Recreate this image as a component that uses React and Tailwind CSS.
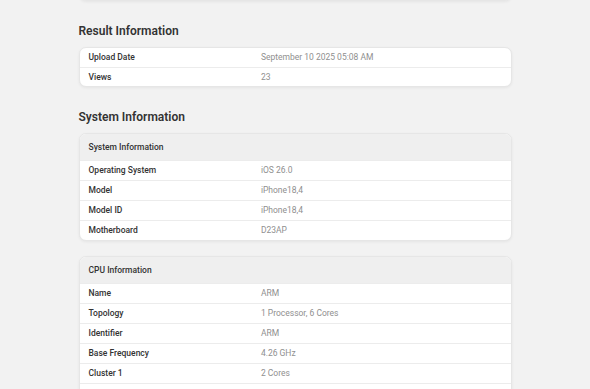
import React from 'react';

const resultRows = [
  ['Upload Date', 'September 10 2025 05:08 AM'],
  ['Views', '23'],
];

const systemRows = [
  ['Operating System', 'iOS 26.0'],
  ['Model', 'iPhone18,4'],
  ['Model ID', 'iPhone18,4'],
  ['Motherboard', 'D23AP'],
];

const cpuRows = [
  ['Name', 'ARM'],
  ['Topology', '1 Processor, 6 Cores'],
  ['Identifier', 'ARM'],
  ['Base Frequency', '4.26 GHz'],
  ['Cluster 1', '2 Cores'],
  ['Cluster 2', '4 Cores'],
];

function Row({ label, value, compact }) {
  return (
    <div className={`flex items-center ${compact ? 'h-[19px]' : 'h-[20px]'} border-t border-[#ececec] first:border-t-0 text-[8.5px]`}>
      <div className="w-2/5 pl-[9px] font-medium text-[#333]">{label}</div>
      <div className="w-3/5 pl-[9px] text-[#8f8f8f]">{value}</div>
    </div>
  );
}

function Card({ title, rows, compact }) {
  return (
    <div className="bg-white rounded-[7px] border border-[#e6e6e6] shadow-[0_1px_3px_rgba(0,0,0,0.06)] overflow-hidden">
      {title && (
        <div className="h-[26px] flex items-center pl-[9px] bg-[#efefef] text-[8.5px] font-medium text-[#333]">
          {title}
        </div>
      )}
      {rows.map(([label, value]) => (
        <Row key={label} label={label} value={value} compact={compact} />
      ))}
    </div>
  );
}

export default function App() {
  return (
    <div className="h-screen bg-[#f2f2f2] overflow-hidden" style={{ fontFamily: 'Roboto, "Liberation Sans", sans-serif' }}>
      <div className="w-[433px] mx-auto">
        <div className="-mt-[60px] h-[61px] bg-white rounded-[7px] border border-[#e6e6e6] shadow-[0_1px_3px_rgba(0,0,0,0.06)]" />

        <h2 className="mt-[21px] mb-[7px] text-[12px] leading-[18px] font-semibold text-[#333]">Result Information</h2>
        <Card rows={resultRows} compact />

        <h2 className="mt-[21px] mb-[7px] text-[12px] leading-[18px] font-semibold text-[#333]">System Information</h2>
        <div className="flex flex-col gap-[15px]">
          <Card title="System Information" rows={systemRows} />
          <Card title="CPU Information" rows={cpuRows} />
        </div>
      </div>
    </div>
  );
}
